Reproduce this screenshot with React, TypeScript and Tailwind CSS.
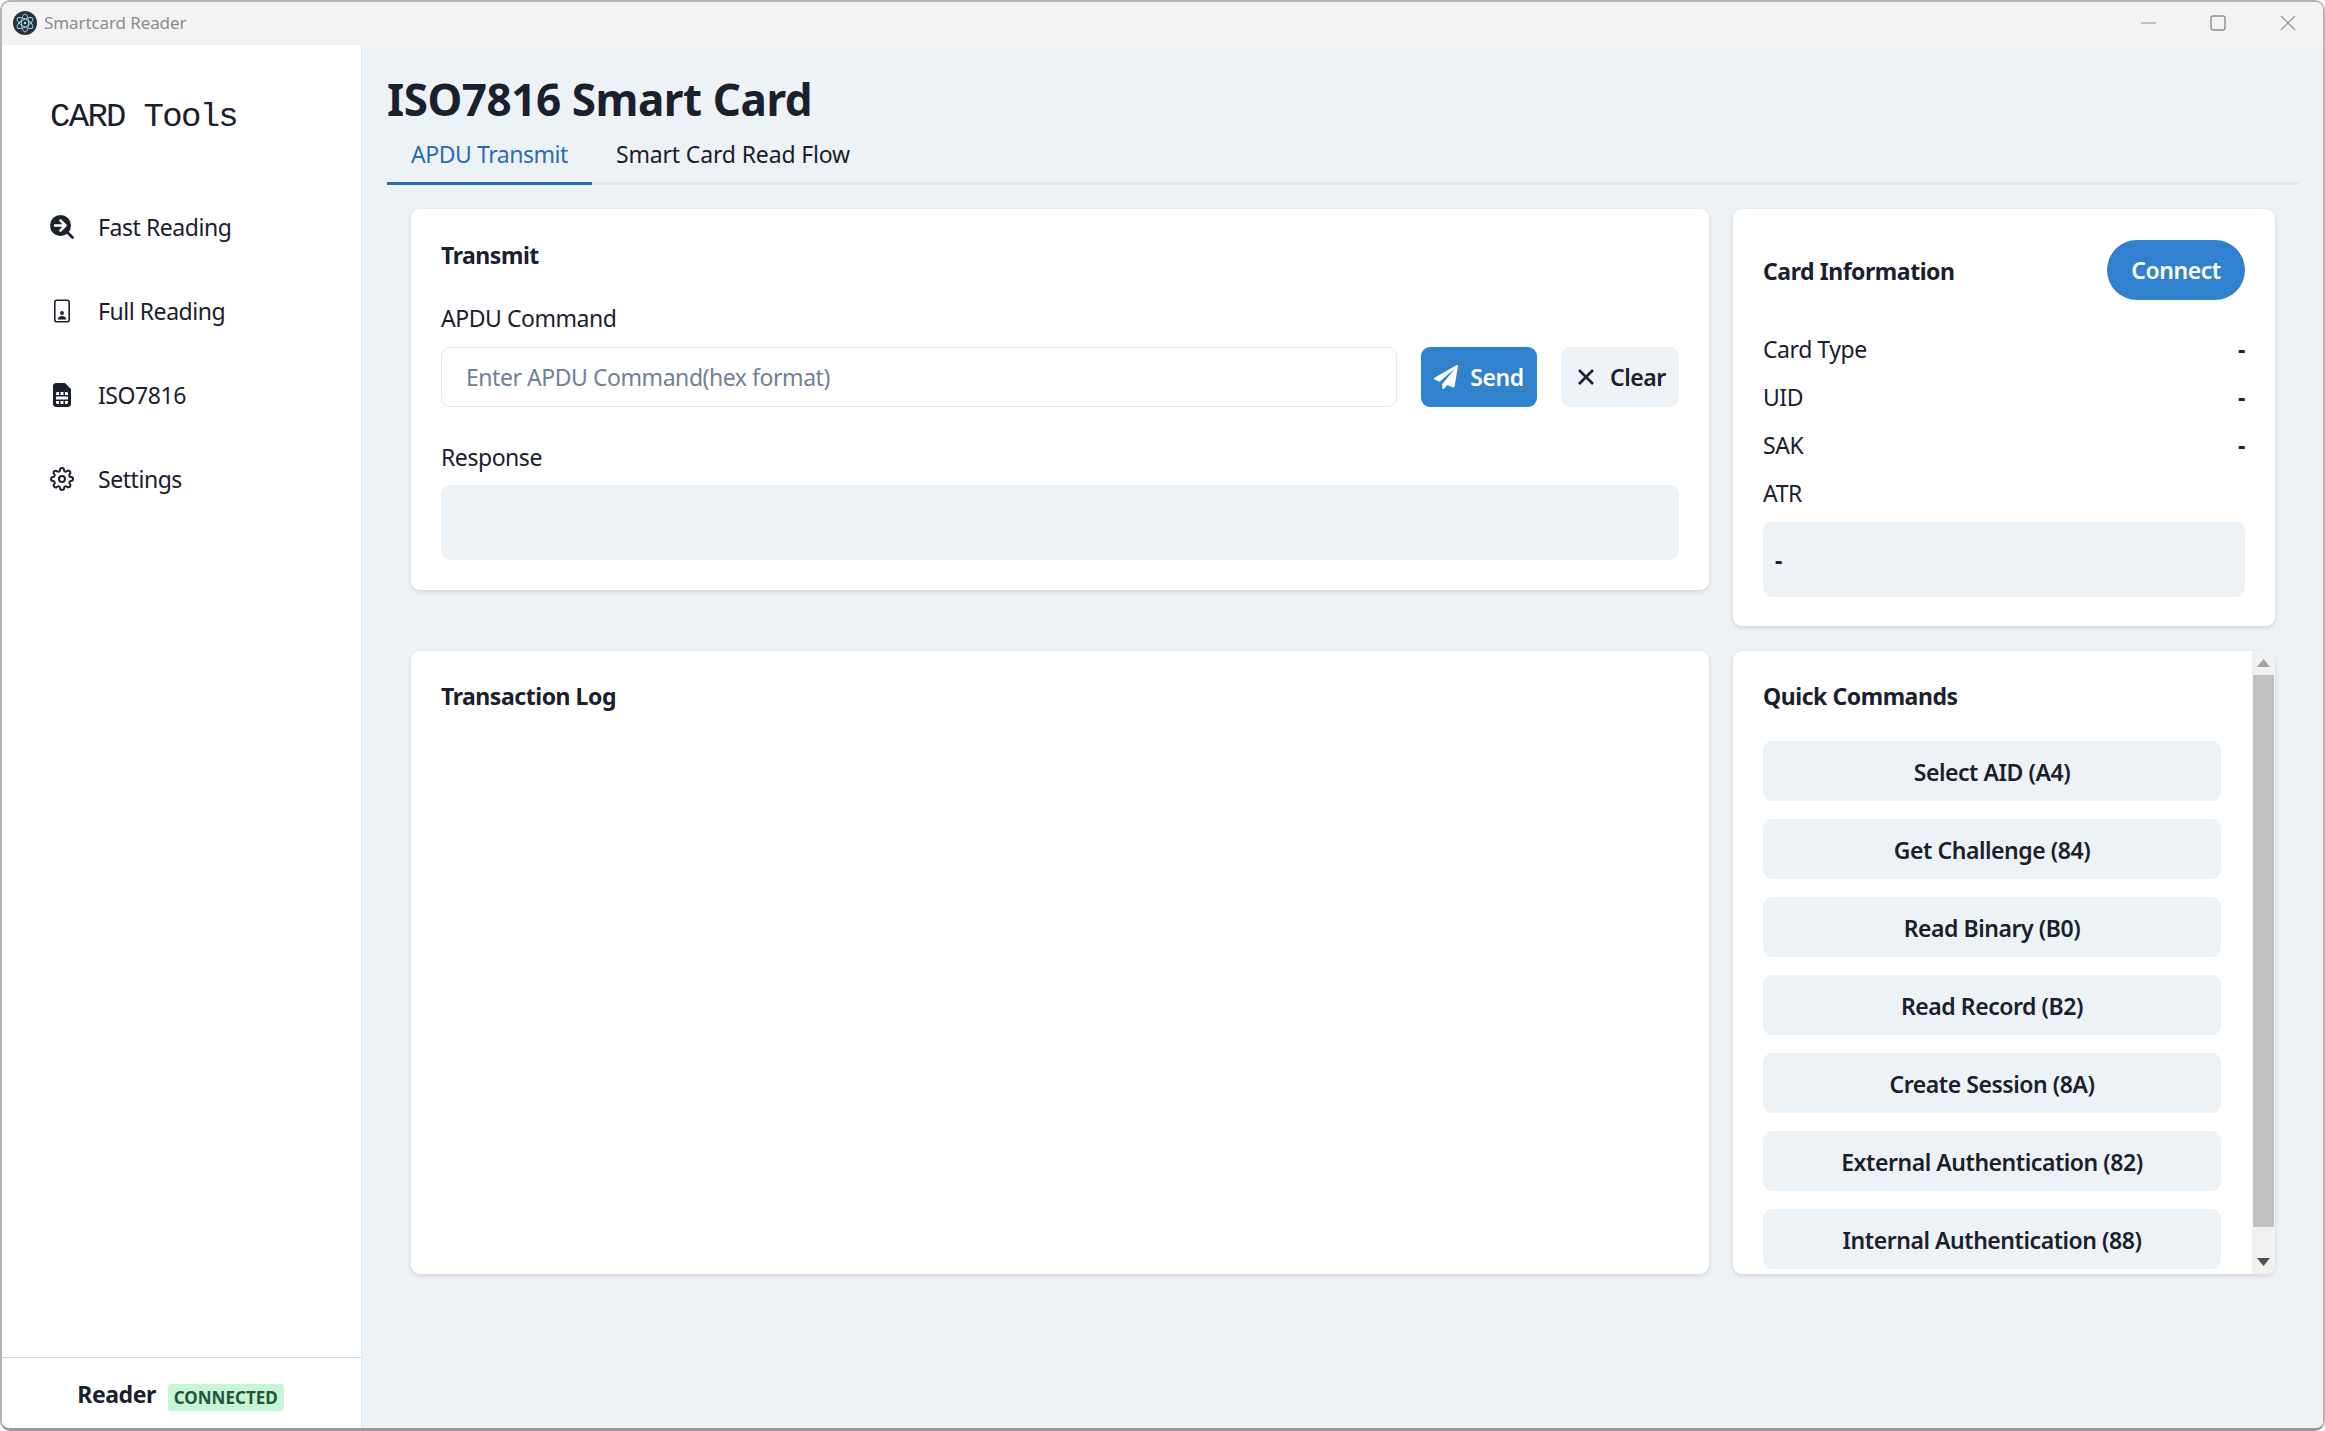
import React from "react";
import { FaSimCard, FaPaperPlane } from "react-icons/fa";
import { FiSettings } from "react-icons/fi";

const ElectronIcon = () => (
  <svg width="24" height="24" viewBox="0 0 24 24" fill="none" stroke="#9fe3f0" strokeWidth="0.9">
    <circle cx="12" cy="12" r="12" fill="#2b2e3b" stroke="none" />
    <ellipse cx="12" cy="12" rx="9" ry="3.6" transform="rotate(30 12 12)" />
    <ellipse cx="12" cy="12" rx="9" ry="3.6" transform="rotate(-30 12 12)" />
    <ellipse cx="12" cy="12" rx="9" ry="3.6" transform="rotate(90 12 12)" />
    <circle cx="12" cy="12" r="1.3" fill="#9fe3f0" stroke="none" />
  </svg>
);

const SearchArrowIcon = () => (
  <svg width="24" height="24" viewBox="0 0 24 24" fill="none">
    <circle cx="10.5" cy="10.5" r="10.5" fill="#1a202c" />
    <path d="M16 16l6.5 6.5" stroke="#1a202c" strokeWidth="2.8" strokeLinecap="round" />
    <path d="M5 10.5h10M10.5 5.5l5 5-5 5" stroke="#fff" strokeWidth="2.6" strokeLinecap="round" strokeLinejoin="round" />
  </svg>
);

const PhoneIcon = () => (
  <svg width="24" height="24" viewBox="0 0 24 24" fill="none">
    <rect x="4.8" y="1.2" width="14.4" height="21.6" rx="2" stroke="#1a202c" strokeWidth="1.6" />
    <circle cx="12" cy="14" r="1.9" fill="#1a202c" />
    <path d="M7.8 20.5c0-2.4 2-3.6 4.2-3.6s4.2 1.2 4.2 3.6z" fill="#1a202c" />
  </svg>
);

const NavItem = ({ icon, label }: { icon: React.ReactNode; label: string }) => (
  <div className="flex h-[84px] items-center">
    <span className="flex h-6 w-6 items-center justify-center">{icon}</span>
    <span className="ml-6 text-[23px] leading-9">{label}</span>
  </div>
);

const Card = ({ className, children }: { className?: string; children: React.ReactNode }) => (
  <div className={"rounded-[9px] bg-white shadow-[0_2px_5px_rgba(0,0,0,0.12)] " + (className ?? "")}>{children}</div>
);

const InfoRow = ({ label, value }: { label: string; value?: string }) => (
  <div className="flex h-12 items-center justify-between text-[23px]">
    <span>{label}</span>
    {value && <span className="font-bold">{value}</span>}
  </div>
);

const commands = [
  "Select AID (A4)",
  "Get Challenge (84)",
  "Read Binary (B0)",
  "Read Record (B2)",
  "Create Session (8A)",
  "External Authentication (82)",
  "Internal Authentication (88)",
];

export default function App() {
  return (
    <div className="h-[1431px] w-[2325px] bg-white">
      <div className="flex h-full flex-col overflow-hidden rounded-[10px] border-2 border-b-[3px] border-[#b4b4b4] border-b-[#9a9a9a] font-['Noto_Sans',sans-serif] tracking-[-0.45px] text-[#1a202c]">
        <div className="flex h-[43px] shrink-0 items-center bg-[#f3f3f3] pb-[2px] pl-[11px]">
          <ElectronIcon />
          <span className="ml-[7px] text-[17px] tracking-[-0.1px] text-[#8c8c8c]">Smartcard Reader</span>
          <div className="ml-auto flex items-center pr-[27px] text-[#8f8f8f]">
            <svg width="16" height="16" viewBox="0 0 16 16" stroke="currentColor" strokeWidth="1"><path d="M0 8h15" /></svg>
            <svg className="ml-[53px]" width="16" height="16" viewBox="0 0 16 16" fill="none" stroke="currentColor" strokeWidth="1.4"><rect x="1" y="1" width="14" height="14" rx="2" /></svg>
            <svg className="ml-[54px]" width="16" height="16" viewBox="0 0 16 16" stroke="currentColor" strokeWidth="1.1"><path d="M1 1l14 14M15 1L1 15" /></svg>
          </div>
        </div>
        <div className="flex min-h-0 flex-1">
          <aside className="flex w-[360px] shrink-0 flex-col border-r border-[#e2e8f0] bg-white">
            <div className="flex-1 pl-12">
              <div className="mt-[46px] mb-[42px] h-[52px] font-['Liberation_Mono',monospace] text-[34px] leading-[52px] tracking-[-1.7px]">CARD Tools</div>
              <nav className="flex flex-col">
                <NavItem icon={<SearchArrowIcon />} label="Fast Reading" />
                <NavItem icon={<PhoneIcon />} label="Full Reading" />
                <NavItem icon={<FaSimCard size={24} />} label="ISO7816" />
                <NavItem icon={<FiSettings size={24} />} label="Settings" />
              </nav>
            </div>
            <div className="flex h-[71px] items-center justify-center gap-3 border-t border-[#cbd5e0] pt-[3px] pr-[2px]">
              <span className="text-[23px] font-bold">Reader</span>
              <span className="mt-[6px] rounded-[3px] bg-[#c6f6d5] px-[6px] text-[17px] font-bold leading-[27px] tracking-normal text-[#22543d]">CONNECTED</span>
            </div>
          </aside>
          <main className="min-w-0 flex-1 bg-[#edf2f7] pr-6 pl-[25px]">
            <h1 className="mt-[29px] h-[50px] text-[44px] font-bold leading-[50px]">ISO7816 Smart Card</h1>
            <div className="mt-[7px] flex h-[54px] border-b-[3px] border-[#e2e8f0]">
              <div className="-mb-[3px] border-b-[3px] border-[#2b6cb0] px-6 text-[23px] leading-[46px] text-[#2b6cb0]">APDU Transmit</div>
              <div className="px-6 text-[23px] leading-[46px] tracking-[-0.15px]">Smart Card Read Flow</div>
            </div>
            <div className="mt-6 grid grid-cols-[1fr_542px] grid-rows-[417px_623px] gap-x-6 gap-y-[25px] px-6">
              <Card className="self-start p-[30px]">
                <div className="h-[30px] pt-px text-[23px] font-bold leading-[30px]">Transmit</div>
                <div className="mt-[31px] text-[23px] leading-9">APDU Command</div>
                <div className="mt-[11px] flex gap-6">
                  <input
                    readOnly
                    placeholder="Enter APDU Command(hex format)"
                    className="h-[60px] min-w-0 flex-1 rounded-[9px] border border-[#e2e8f0] px-6 text-[23px] outline-none placeholder:text-[#718096]"
                  />
                  <button className="flex h-[60px] w-[116px] items-center justify-center gap-3 rounded-[9px] bg-[#3182ce] text-[23px] font-semibold text-white">
                    <FaPaperPlane size={24} />
                    Send
                  </button>
                  <button className="flex h-[60px] w-[118px] items-center justify-center gap-3 rounded-[9px] bg-[#edf2f7] text-[23px] font-semibold">
                    <svg width="24" height="24" viewBox="0 0 24 24" stroke="currentColor" strokeWidth="2.6"><path d="M5 5l14 14M19 5L5 19" /></svg>
                    Clear
                  </button>
                </div>
                <div className="mt-[32px] text-[23px] leading-9">Response</div>
                <div className="mt-[10px] h-[75px] rounded-[9px] bg-[#edf2f7]" />
              </Card>
              <Card className="self-start px-[30px] pt-[31px] pb-[29px]">
                <div className="flex h-[60px] items-center justify-between">
                  <span className="pt-[2px] text-[23px] font-bold">Card Information</span>
                  <button className="h-[60px] w-[138px] rounded-full bg-[#3182ce] text-[23px] font-semibold text-white">Connect</button>
                </div>
                <div className="mt-[25px]">
                  <InfoRow label="Card Type" value="-" />
                  <InfoRow label="UID" value="-" />
                  <InfoRow label="SAK" value="-" />
                  <InfoRow label="ATR" />
                </div>
                <div className="mt-[5px] flex h-[75px] items-center rounded-[9px] bg-[#edf2f7] px-3 pt-[2px] text-[23px] font-bold">-</div>
              </Card>
              <Card className="p-[30px]">
                <div className="text-[23px] font-bold leading-[30px]">Transaction Log</div>
              </Card>
              <Card className="flex overflow-hidden">
                <div className="min-w-0 flex-1 pt-[30px] pr-[31px] pl-[30px]">
                  <div className="text-[23px] font-bold leading-[30px]">Quick Commands</div>
                  <div className="mt-[30px] flex flex-col gap-[18px]">
                    {commands.map((c) => (
                      <button key={c} className="h-[60px] shrink-0 rounded-[9px] bg-[#edf2f7] pt-[2px] text-[23px] font-semibold">{c}</button>
                    ))}
                  </div>
                </div>
                <div className="flex w-[23px] shrink-0 flex-col items-center bg-[#f1f1f1]">
                  <svg className="mt-2" width="13" height="8" viewBox="0 0 13 8" fill="#a3a3a3"><path d="M6.5 0L13 8H0z" /></svg>
                  <div className="mt-[8px] h-[552px] w-[21px] bg-[#c1c1c1]" />
                  <svg className="mt-auto mb-2" width="13" height="8" viewBox="0 0 13 8" fill="#505050"><path d="M0 0h13L6.5 8z" /></svg>
                </div>
              </Card>
            </div>
          </main>
        </div>
      </div>
    </div>
  );
}
